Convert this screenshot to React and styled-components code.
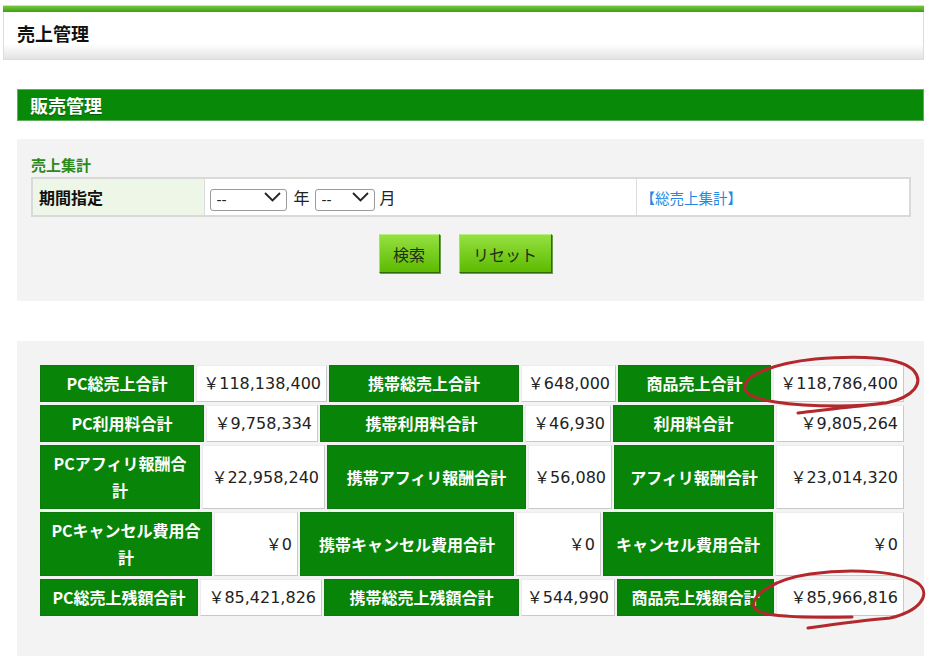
import React from "react";
import styled, { createGlobalStyle } from "styled-components";

const Global = createGlobalStyle`
  html, body { margin: 0; padding: 0; background: #fff; }
  body { font-family: "Noto Sans CJK JP", "Noto Sans", sans-serif; color: #111; }
`;

const Page = styled.div`
  padding: 5px 12px 12px 3px;
`;

const TopBar = styled.div`
  height: 6px;
  border-top: 1px solid #d8d8d8;
  background: linear-gradient(#74c63c, #3f9e12);
`;

const TitleBox = styled.div`
  height: 48px;
  box-sizing: border-box;
  border: 1px solid #dcdcdc;
  border-top: none;
  background: linear-gradient(to bottom, #fff 0%, #fff 68%, #e3e3e3 100%);
  padding: 0 13px 5px;
  display: flex;
  align-items: center;
  font-size: 18px;
  font-weight: 700;
  color: #111;
`;

const Content = styled.div`
  margin: 29px 0 0 14px;
`;

const SectionHeader = styled.div`
  height: 32px;
  line-height: 30px;
  background: #088a08;
  border: 1px solid #5fae5f;
  box-sizing: border-box;
  color: #fff;
  font-size: 18px;
  font-weight: 700;
  padding-left: 12px;
  text-shadow: 0 1px 1px rgba(0, 0, 0, 0.35);
`;

const Panel = styled.div`
  position: relative;
  background: #f3f3f3;
  margin-top: ${(p) => p.$mt}px;
  padding: ${(p) => p.$pad};
`;

const SubHeading = styled.div`
  color: #2c8a1c;
  font-size: 15px;
  font-weight: 700;
  line-height: 18px;
  margin-bottom: 3px;
`;

const SearchTable = styled.table`
  width: 100%;
  table-layout: fixed;
  border-collapse: collapse;
  border: 2px solid #d9d9d9;
  background: #fff;
`;

const Th = styled.th`
  height: 38px;
  box-sizing: border-box;
  background: #edf6e7;
  border-right: 1px solid #dcdcdc;
  text-align: left;
  padding: 0 6px;
  font-size: 16px;
  font-weight: 700;
  color: #111;
`;

const Td = styled.td`
  border-right: 1px solid #dcdcdc;
  padding: 0 ${(p) => p.$px || 5}px;
  font-size: 16px;
  vertical-align: middle;
`;

const Inline = styled.div`
  display: flex;
  align-items: center;
`;

const SelectWrap = styled.div`
  position: relative;
  width: ${(p) => p.$w}px;
  height: 22px;
  margin-right: ${(p) => p.$mr}px;
`;

const Select = styled.select`
  appearance: none;
  -webkit-appearance: none;
  width: 100%;
  height: 100%;
  box-sizing: border-box;
  border: 1px solid #9a9a9a;
  border-radius: 3px;
  background: #fff;
  padding: 0 0 0 6px;
  font-family: "DejaVu Sans", sans-serif;
  font-size: 14px;
  color: #222;
`;

const Chevron = styled.svg`
  position: absolute;
  right: 6px;
  top: 6px;
  pointer-events: none;
`;

const Unit = styled.span`
  font-size: 16px;
  margin-right: ${(p) => p.$mr}px;
  color: #222;
`;

const LinkText = styled.a`
  color: #2487e3;
  font-size: 14.5px;
  text-decoration: none;
`;

const Buttons = styled.div`
  display: flex;
  justify-content: center;
  gap: 19px;
  margin-top: 17px;
  padding-right: 12px;
`;

const Button = styled.button`
  width: ${(p) => p.$w}px;
  height: 39px;
  box-sizing: border-box;
  background: linear-gradient(#96e040, #5cba00);
  border: 1px solid;
  border-color: #b9ef85 #2f6a08 #2f6a08 #a8e26c;
  box-shadow: 1px 1px 0 #6a9a50;
  font-family: "Noto Sans CJK JP", sans-serif;
  font-size: 16px;
  color: #1e3010;
  padding: 0;
`;

const Grid = styled.div`
  display: flex;
  flex-direction: column;
  gap: 3px;
`;

const Row = styled.div`
  display: flex;
  gap: 2px;
  min-height: 37px;
`;

const LabelCell = styled.div`
  width: ${(p) => p.$w}px;
  flex-shrink: 0;
  box-sizing: border-box;
  background: #088508;
  border: 1px solid #0b7a0b;
  color: #fff;
  font-size: 16px;
  font-weight: 700;
  line-height: 27px;
  padding: 4px 8px;
  display: flex;
  align-items: center;
  justify-content: center;
  text-align: center;
`;

const ValueCell = styled.div`
  width: ${(p) => (p.$w ? p.$w + "px" : "auto")};
  flex: ${(p) => (p.$w ? "0 0 auto" : "1 1 auto")};
  box-sizing: border-box;
  background: #fff;
  border: 1px solid;
  border-color: #ececec #c9c9c9 #c9c9c9 #ececec;
  color: #222;
  font-family: "DejaVu Sans", "Noto Sans CJK JP", sans-serif;
  font-size: 16px;
  line-height: 27px;
  padding: 4px 5px 4px 4px;
  display: flex;
  align-items: center;
  justify-content: flex-end;
  white-space: nowrap;
`;

const Overlay = styled.svg`
  position: absolute;
  left: 0;
  top: 0;
  pointer-events: none;
  overflow: visible;
`;

const rows = [
  {
    w: [154, 131, 190, 95, 153],
    cells: [
      ["PC総売上合計", "￥118,138,400"],
      ["携帯総売上合計", "￥648,000"],
      ["商品売上合計", "￥118,786,400"],
    ],
  },
  {
    w: [164, 112, 203, 86, 161],
    cells: [
      ["PC利用料合計", "￥9,758,334"],
      ["携帯利用料合計", "￥46,930"],
      ["利用料合計", "￥9,805,264"],
    ],
  },
  {
    w: [160, 123, 199, 84, 160],
    cells: [
      ["PCアフィリ報酬合計", "￥22,958,240"],
      ["携帯アフィリ報酬合計", "￥56,080"],
      ["アフィリ報酬合計", "￥23,014,320"],
    ],
  },
  {
    w: [172, 84, 214, 85, 170],
    cells: [
      ["PCキャンセル費用合計", "￥0"],
      ["携帯キャンセル費用合計", "￥0"],
      ["キャンセル費用合計", "￥0"],
    ],
  },
  {
    w: [158, 122, 195, 94, 157],
    cells: [
      ["PC総売上残額合計", "￥85,421,826"],
      ["携帯総売上残額合計", "￥544,990"],
      ["商品売上残額合計", "￥85,966,816"],
    ],
  },
];

const ChevronIcon = () => (
  <Chevron width="17" height="10" viewBox="0 0 17 10">
    <path d="M1 1 L8.5 8.5 L16 1" fill="none" stroke="#222" strokeWidth="1.8" />
  </Chevron>
);

export default function App() {
  return (
    <Page>
      <Global />
      <TopBar />
      <TitleBox>売上管理</TitleBox>
      <Content>
        <SectionHeader>販売管理</SectionHeader>
        <Panel $mt={18} $pad="17px 13px 28px 14px">
          <SubHeading>売上集計</SubHeading>
          <SearchTable>
            <colgroup>
              <col style={{ width: 172 }} />
              <col style={{ width: 432 }} />
              <col />
            </colgroup>
            <tbody>
              <tr>
                <Th>期間指定</Th>
                <Td>
                  <Inline>
                    <SelectWrap $w={77} $mr={7}>
                      <Select defaultValue="">
                        <option value="">--</option>
                      </Select>
                      <ChevronIcon />
                    </SelectWrap>
                    <Unit $mr={5}>年</Unit>
                    <SelectWrap $w={60} $mr={5}>
                      <Select defaultValue="">
                        <option value="">--</option>
                      </Select>
                      <ChevronIcon />
                    </SelectWrap>
                    <Unit $mr={0}>月</Unit>
                  </Inline>
                </Td>
                <Td $px={4}>
                  <LinkText href="#">【総売上集計】</LinkText>
                </Td>
              </tr>
            </tbody>
          </SearchTable>
          <Buttons>
            <Button $w={61}>検索</Button>
            <Button $w={93}>リセット</Button>
          </Buttons>
        </Panel>
        <Panel $mt={40} $pad="24px 20px 40px 23px">
          <Grid>
            {rows.map((r, i) => (
              <Row key={i}>
                {r.cells.map(([label, value], j) => (
                  <React.Fragment key={j}>
                    <LabelCell $w={r.w[j * 2]}>{label}</LabelCell>
                    <ValueCell $w={j < 2 ? r.w[j * 2 + 1] : undefined}>{value}</ValueCell>
                  </React.Fragment>
                ))}
              </Row>
            ))}
          </Grid>
          <Overlay width="908" height="315" viewBox="17 342 908 315">
            <path
              d="M 798 414 C 830 410, 862 407, 886 404 C 914 398, 924 384, 914 372 C 902 358, 860 356, 815 360 C 776 364, 742 376, 745 390 C 748 402, 792 407, 838 407 C 860 407, 878 405, 884 404"
              fill="none"
              stroke="#b3282d"
              strokeWidth="3"
              strokeLinecap="round"
            />
            <path
              d="M 808 629 C 836 625, 866 621, 890 619 C 920 612, 931 596, 919 585 C 902 572, 852 569, 810 575 C 776 580, 751 595, 754 608 C 757 618, 802 619, 852 618"
              fill="none"
              stroke="#b3282d"
              strokeWidth="3"
              strokeLinecap="round"
            />
          </Overlay>
        </Panel>
      </Content>
    </Page>
  );
}
